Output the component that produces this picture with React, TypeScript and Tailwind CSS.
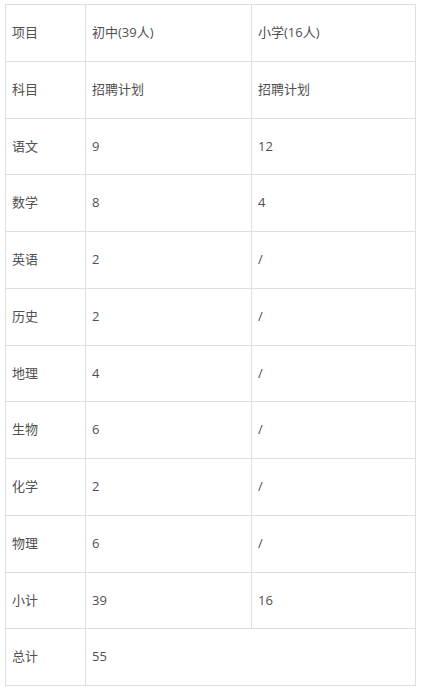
const rows: string[][] = [
  ["项目", "初中(39人)", "小学(16人)"],
  ["科目", "招聘计划", "招聘计划"],
  ["语文", "9", "12"],
  ["数学", "8", "4"],
  ["英语", "2", "/"],
  ["历史", "2", "/"],
  ["地理", "4", "/"],
  ["生物", "6", "/"],
  ["化学", "2", "/"],
  ["物理", "6", "/"],
  ["小计", "39", "16"],
]

export default function App() {
  return (
    <div className="w-[422px] h-[690px] bg-white pt-[4px] pl-[5px] font-['Open_Sans','Noto_Sans_CJK_SC',sans-serif] text-[13px] text-[#505050]">
      <div className="grid w-[411px] grid-cols-[80px_166px_165px] auto-rows-[56.75px] border-r border-b border-[#dcdfe6]">
        {rows.map((row) =>
          row.map((cell, i) => (
            <div
              key={row[0] + i}
              className="flex items-center border-t border-l border-[#dcdfe6] pl-[6px]"
            >
              {cell}
            </div>
          ))
        )}
        <div className="flex items-center border-t border-l border-[#dcdfe6] pl-[6px]">总计</div>
        <div className="col-span-2 flex items-center border-t border-l border-[#dcdfe6] pl-[6px]">55</div>
      </div>
    </div>
  )
}
